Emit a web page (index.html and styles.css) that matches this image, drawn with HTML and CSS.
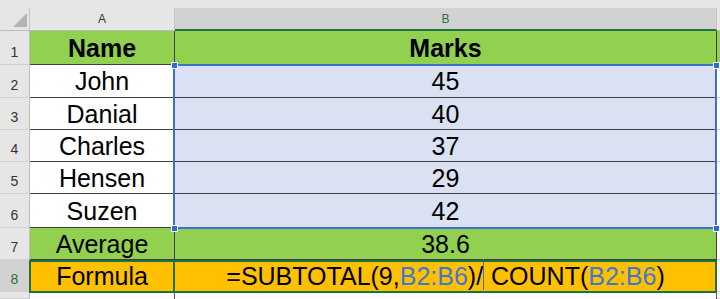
FILE: index.html
```html
<!DOCTYPE html>
<html>
<head>
<meta charset="utf-8">
<link rel="stylesheet" href="styles.css">
</head>
<body>
<div class="sheet">
  <div class="strip"></div>

  <div class="corner"><span class="tri"></span></div>
  <div class="colhead">A</div>
  <div class="colhead sel">B</div>
  <div class="colhead edge"></div>

  <div class="rowhead">1</div>
  <div class="cell green bold">Name</div>
  <div class="cell green bold">Marks</div>
  <div class="cell c green"></div>

  <div class="rowhead">2</div>
  <div class="cell">John</div>
  <div class="cell hl">45</div>
  <div class="cell c"></div>

  <div class="rowhead">3</div>
  <div class="cell">Danial</div>
  <div class="cell hl">40</div>
  <div class="cell c"></div>

  <div class="rowhead">4</div>
  <div class="cell">Charles</div>
  <div class="cell hl">37</div>
  <div class="cell c"></div>

  <div class="rowhead">5</div>
  <div class="cell">Hensen</div>
  <div class="cell hl">29</div>
  <div class="cell c"></div>

  <div class="rowhead">6</div>
  <div class="cell">Suzen</div>
  <div class="cell hl">42</div>
  <div class="cell c"></div>

  <div class="rowhead">7</div>
  <div class="cell green">Average</div>
  <div class="cell green">38.6</div>
  <div class="cell c"></div>

  <div class="rowhead sel">8</div>
  <div class="cell orange">Formula</div>
  <div class="cell orange"><span class="formula">=SUBTOTAL(9,<span class="ref">B2:B6</span>)/<span class="caret"></span> COUNT(<span class="ref">B2:B6</span>)</span></div>
  <div class="cell c"></div>

  <div class="rowhead"></div>
  <div class="cell blank"></div>
  <div class="cell blank"></div>
  <div class="cell c"></div>

  <div class="range">
    <span class="handle tl"></span>
    <span class="handle tr"></span>
    <span class="handle bl"></span>
    <span class="handle br"></span>
  </div>
  <div class="active act-a"></div>
  <div class="active act-b"></div>
</div>
</body>
</html>
```

FILE: styles.css
```css
* { box-sizing: border-box; }

body {
  margin: 0;
  background: #ffffff;
  font-family: "Liberation Sans", Arial, sans-serif;
}

.sheet {
  position: relative;
  display: grid;
  grid-template-columns: 30px 145px 542px 3px;
  grid-template-rows: 8px 23px 34px 33px 32px 32px 32px 34px 32px 32px 7px;
  width: 720px;
  height: 299px;
  overflow: hidden;
}

.strip {
  grid-column: 1 / -1;
  background: #e6e6e6;
}

.corner {
  background: #e6e6e6;
  border-right: 1px solid #c6c6c6;
  border-bottom: 1px solid #bdbdbd;
  display: flex;
  justify-content: flex-end;
  align-items: flex-end;
  padding: 0 2px 3px 0;
}

.tri {
  width: 14px;
  height: 14px;
  background: #b4b4b4;
  clip-path: polygon(100% 0, 100% 100%, 0 100%);
}

.colhead {
  background: #e6e6e6;
  border-right: 1px solid #c6c6c6;
  border-bottom: 1px solid #bdbdbd;
  display: flex;
  align-items: center;
  justify-content: center;
  font-size: 12px;
  color: #333333;
}

.colhead.sel {
  background: #d2d2d2;
  border-bottom: 2px solid #217346;
  color: #217346;
}

.colhead.edge {
  border-right: none;
}

.rowhead {
  background: #e6e6e6;
  border-right: 1px solid #bdbdbd;
  border-bottom: 1px solid #d0d0d0;
  display: flex;
  justify-content: center;
  align-items: flex-end;
  padding-bottom: 4px;
  font-size: 14px;
  color: #333333;
}

.rowhead.sel {
  background: #d2d2d2;
  color: #217346;
}

.cell {
  border-right: 1px solid #3f3f3f;
  border-bottom: 1px solid #3f3f3f;
  display: flex;
  align-items: center;
  justify-content: center;
  padding-top: 1px;
  font-size: 25px;
  color: #000000;
  white-space: nowrap;
  background: #ffffff;
}

.cell.c {
  border-right: none;
  border-bottom: 1px solid #d4d4d4;
}

.cell.blank {
  border-bottom: none;
  border-right: 1px solid #5a5a5a;
}

.green { background: #92d050; }
.cell.c.green { background: #92d050; }
.orange { background: #ffc000; }
.hl { background: #d9e1f2; }
.bold { font-weight: bold; }

.formula { white-space: pre; }

.ref { color: #3f78d0; }

.caret {
  display: inline-block;
  width: 1px;
  height: 31px;
  margin: -10px 0;
  background: #3b6fd4;
  vertical-align: middle;
  position: relative;
  top: -3px;
}

.range {
  position: absolute;
  left: 173px;
  top: 64px;
  width: 544px;
  height: 165px;
  border: 2px solid #3b6fd4;
}

.handle {
  position: absolute;
  width: 7px;
  height: 7px;
  background: #2f6cd2;
  border: 1px solid #ffffff;
}

.handle.tl { left: -4px; top: -4px; }
.handle.tr { right: -5px; top: -4px; }
.handle.bl { left: -4px; bottom: -5px; }
.handle.br { right: -5px; bottom: -5px; }

.active {
  position: absolute;
  top: 260px;
  height: 33px;
  border: 2px solid #1e7145;
}

.act-a { left: 29px; width: 146px; }
.act-b { left: 173px; width: 544px; }
```
